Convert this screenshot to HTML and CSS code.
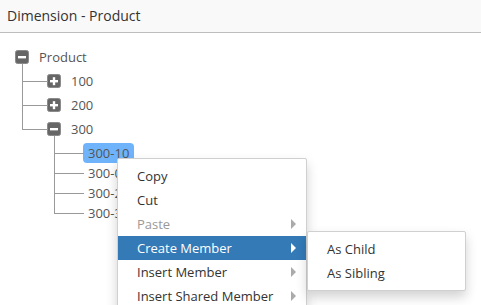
FILE: index.html
```html
<!DOCTYPE html>
<html lang="en">
<head>
    <meta charset="UTF-8">
    <meta name="viewport" content="width=device-width, initial-scale=1.0">
    <title>Dimension - Product</title>
    <link rel="stylesheet" href="styles.css">
</head>
<body>
<div class="panel">
    <div class="panel-title">Dimension - Product</div>
    <div class="tree-area">
        <ul class="tree">
            <li>
                <div class="node">
                    <span class="toggle"><svg width="14" height="14" viewBox="0 0 14 14"><rect x="0.5" y="0.5" width="13" height="13" rx="2" fill="#666" stroke="#8a8a8a"/><rect x="3" y="6" width="8" height="2.4" fill="#fff"/></svg></span>
                    <span class="label">Product</span>
                </div>
                <ul class="level1">
                    <li>
                        <div class="node">
                            <span class="toggle"><svg width="14" height="14" viewBox="0 0 14 14"><rect x="0.5" y="0.5" width="13" height="13" rx="2" fill="#666" stroke="#8a8a8a"/><rect x="3" y="6" width="8" height="2.4" fill="#fff"/><rect x="5.8" y="3.2" width="2.4" height="8" fill="#fff"/></svg></span>
                            <span class="label">100</span>
                        </div>
                    </li>
                    <li>
                        <div class="node">
                            <span class="toggle"><svg width="14" height="14" viewBox="0 0 14 14"><rect x="0.5" y="0.5" width="13" height="13" rx="2" fill="#666" stroke="#8a8a8a"/><rect x="3" y="6" width="8" height="2.4" fill="#fff"/><rect x="5.8" y="3.2" width="2.4" height="8" fill="#fff"/></svg></span>
                            <span class="label">200</span>
                        </div>
                    </li>
                    <li>
                        <div class="node">
                            <span class="toggle"><svg width="14" height="14" viewBox="0 0 14 14"><rect x="0.5" y="0.5" width="13" height="13" rx="2" fill="#666" stroke="#8a8a8a"/><rect x="3" y="6" width="8" height="2.4" fill="#fff"/></svg></span>
                            <span class="label">300</span>
                        </div>
                        <ul class="leaves">
                            <li><div class="leaf"><span class="leaf-label selected">300-10</span></div></li>
                            <li><div class="leaf"><span class="leaf-label">300-0</span></div></li>
                            <li><div class="leaf"><span class="leaf-label">300-2</span></div></li>
                            <li><div class="leaf"><span class="leaf-label">300-3</span></div></li>
                        </ul>
                    </li>
                </ul>
            </li>
        </ul>
    </div>

    <!-- context menu for the selected member -->
    <ul class="context-menu">
        <li class="menu-item">Copy</li>
        <li class="menu-item">Cut</li>
        <li class="menu-item disabled has-sub">Paste</li>
        <li class="menu-item active has-sub">Create Member
            <ul class="submenu">
                <li class="menu-item">As Child</li>
                <li class="menu-item">As Sibling</li>
            </ul>
        </li>
        <li class="menu-item has-sub">Insert Member</li>
        <li class="menu-item has-sub">Insert Shared Member</li>
    </ul>
</div>
</body>
</html>
```

FILE: styles.css
```css
html, body {
    height: 100%;
    overflow: hidden;
}
body {
    margin: 0;
    font-family: "Open Sans", "Liberation Sans", sans-serif;
    font-size: 13px;
    color: #333;
    background-color: #fff;
}
ul {
    list-style: none;
    margin: 0;
    padding: 0;
}
.panel {
    position: relative;
    height: 100%;
}
.panel-title {
    height: 32px;
    line-height: 32px;
    padding-left: 7px;
    font-size: 14px;
    color: #333;
    background-color: #f9f9f9;
    border-bottom: 1px solid #bdbdbd;
}
.tree-area {
    padding: 12px 0 0 15px;
}
.tree li {
    position: relative;
}
.node {
    display: flex;
    align-items: center;
    height: 24px;
}
.toggle {
    display: flex;
    width: 14px;
    height: 14px;
}
.label {
    margin-left: 10px;
    color: #555;
}
.level1 {
    padding-left: 32px;
}
.level1 > li::before {
    content: "";
    position: absolute;
    left: -25px;
    top: -5px;
    width: 25px;
    height: 17px;
    border-left: 1px solid #999;
    border-bottom: 1px solid #999;
}
.level1 > li:not(:last-child)::after {
    content: "";
    position: absolute;
    left: -25px;
    top: 12px;
    bottom: 0;
    border-left: 1px solid #999;
}
.leaves {
    padding-left: 36px;
    margin-top: 2px;
}
.leaves > li::before {
    content: "";
    position: absolute;
    left: -29px;
    top: -7px;
    width: 29px;
    height: 17px;
    border-left: 1px solid #999;
    border-bottom: 1px solid #999;
}
.leaves > li:not(:last-child)::after {
    content: "";
    position: absolute;
    left: -29px;
    top: 10px;
    bottom: 0;
    border-left: 1px solid #999;
}
.leaf {
    display: flex;
    align-items: center;
    height: 20px;
}
.leaf-label {
    padding: 0 5px;
    height: 20px;
    line-height: 20px;
    color: #555;
    border-radius: 4px;
}
.leaf-label.selected {
    background-color: #6fb4fb;
}
.context-menu {
    position: absolute;
    left: 117px;
    top: 158px;
    width: 188px;
    padding: 5px 0;
    background-color: #fff;
    border: 1px solid #d0d0d0;
    border-radius: 2px;
    box-shadow: 0 6px 12px rgba(0, 0, 0, 0.18);
}
.menu-item {
    position: relative;
    height: 24px;
    line-height: 24px;
    padding-left: 19px;
    color: #333;
    white-space: nowrap;
}
.menu-item.disabled {
    color: #999;
}
.menu-item.active {
    background-color: #337ab7;
    color: #fff;
}
.has-sub::after {
    content: "";
    position: absolute;
    right: 10px;
    top: 7px;
    border-left: 5px solid #aaa;
    border-top: 5px solid transparent;
    border-bottom: 5px solid transparent;
}
.has-sub.active::after {
    border-left-color: #fff;
}
.submenu {
    position: absolute;
    left: 100%;
    top: -5px;
    width: 157px;
    margin-left: 1px;
    padding: 5px 0;
    background-color: #fff;
    border: 1px solid #d0d0d0;
    border-radius: 2px;
    box-shadow: 0 6px 12px rgba(0, 0, 0, 0.18);
}
.submenu .menu-item {
    color: #333;
}
```
